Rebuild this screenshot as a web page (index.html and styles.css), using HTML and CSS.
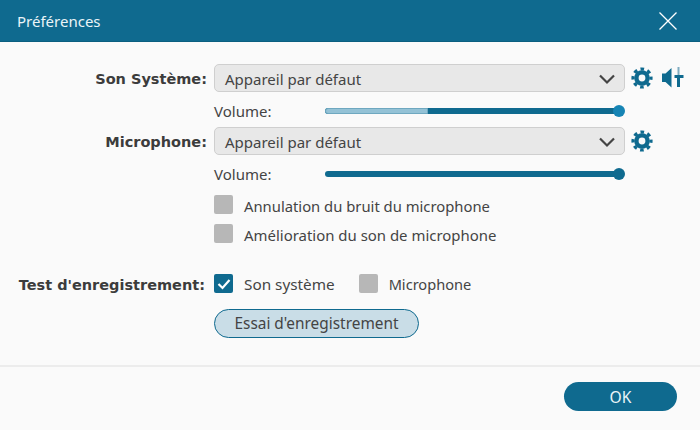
FILE: index.html
```html
<!DOCTYPE html>
<html lang="fr">
<head>
<meta charset="utf-8">
<title>Préférences</title>
<link rel="stylesheet" href="styles.css">
</head>
<body>
<div class="dialog">
  <header class="titlebar">
    <span class="title">Préférences</span>
    <svg class="close" width="18" height="18" viewBox="0 0 18 18"><path d="M0.5 0.5L17.5 17.5M17.5 0.5L0.5 17.5" stroke="#fff" stroke-width="1.3" fill="none"/></svg>
  </header>
  <main class="content">
    <div class="row">
      <span class="label">Son Système:</span>
      <div class="select"><span class="select-text">Appareil par défaut</span><svg class="chevron" width="18" height="11" viewBox="0 0 18 11"><path d="M2 1.5L9 8.5L16 1.5" stroke="#444" stroke-width="2.2" fill="none"/></svg></div>
      <div class="icons">
        <svg class="gear" width="22" height="22" viewBox="0 0 22 22"><use href="#gear"/></svg>
        <svg class="mixer" width="22" height="22" viewBox="0 0 22 22"><path d="M0 6.5H3.5L9.5 1V20.5L3.5 15H0Z" fill="#0f6a8f"/><rect x="15.5" y="0" width="2" height="8" fill="#7fabc0"/><rect x="15" y="8" width="3" height="12" fill="#0f6a8f"/><rect x="12.5" y="8" width="9" height="3" fill="#0f6a8f"/></svg>
      </div>
    </div>
    <div class="volume">
      <span class="vol-label">Volume:</span>
      <div class="slider"><div class="buffer"></div><div class="thumb thumb-light"></div></div>
    </div>
    <div class="row">
      <span class="label">Microphone:</span>
      <div class="select"><span class="select-text">Appareil par défaut</span><svg class="chevron" width="18" height="11" viewBox="0 0 18 11"><path d="M2 1.5L9 8.5L16 1.5" stroke="#444" stroke-width="2.2" fill="none"/></svg></div>
      <div class="icons">
        <svg class="gear" width="22" height="22" viewBox="0 0 22 22"><use href="#gear"/></svg>
      </div>
    </div>
    <div class="volume">
      <span class="vol-label">Volume:</span>
      <div class="slider"><div class="thumb"></div></div>
    </div>
    <div class="checks">
      <label class="check"><span class="box"></span>Annulation du bruit du microphone</label>
      <label class="check check-long"><span class="box"></span>Amélioration du son de microphone</label>
    </div>
    <div class="test-row">
      <span class="label">Test d'enregistrement:</span>
      <label class="check check-sys"><span class="box box-on"><svg width="14" height="12" viewBox="0 0 14 12"><path d="M1.5 6L5.5 10L12.5 2" stroke="#fff" stroke-width="2.2" fill="none"/></svg></span>Son système</label>
      <label class="check check-mic"><span class="box"></span>Microphone</label>
    </div>
    <button class="test-btn">Essai d'enregistrement</button>
  </main>
  <footer class="footer"><button class="ok">OK</button></footer>
</div>
<svg class="defs" width="0" height="0"><defs>
  <g id="gear" fill="none" stroke="#0f6a8f">
    <circle cx="11" cy="11" r="5.6" stroke-width="4.4"/>
    <circle cx="11" cy="11" r="9" stroke-width="3.2" stroke-dasharray="3.6 3.47" stroke-dashoffset="1.8"/>
  </g>
</defs></svg>
</body>
</html>
```
FILE: styles.css
```css
* { box-sizing: border-box; }
html, body { margin: 0; padding: 0; }
body { width: 700px; height: 430px; overflow: hidden; background: #fafafa; font-family: "Noto Sans", "Open Sans", sans-serif; font-size: 15px; color: #444; }
.dialog { width: 700px; height: 430px; display: flex; flex-direction: column; }
.titlebar { height: 42px; flex: none; background: #0f6a8f; border-bottom: 1px solid #0b5f80; display: flex; align-items: center; justify-content: space-between; padding: 0 23px 0 17px; color: #eaf4f8; font-size: 15px; }
.content { flex: 1; padding: 22px 0 0; display: flex; flex-direction: column; }
.row { display: flex; align-items: center; height: 28px; }
.label { width: 207px; padding-top: 2px; text-align: right; font-family: "DejaVu Sans", sans-serif; font-weight: bold; font-size: 14.5px; color: #3c3c3c; white-space: nowrap; flex: none; }
.select { width: 411px; height: 28px; margin-left: 7px; background: #e8e8e8; border: 1px solid #cfcfcf; border-radius: 5px; display: flex; align-items: center; justify-content: space-between; padding: 0 8px 0 10px; flex: none; }
.select-text { padding-top: 1px; }
.chevron { margin-top: 2px; }
.icons { display: flex; align-items: center; gap: 9px; margin-left: 6px; }
.volume { display: flex; align-items: center; height: 35px; padding: 3px 0 0 214px; }
.vol-label { width: 111px; flex: none; }
.slider { position: relative; width: 294px; height: 6px; border-radius: 3px; background: #0f6a8f; }
.buffer { width: 103px; height: 6px; border-radius: 3px 0 0 3px; background: #94c2d6; border: 1px solid #6fa8c0; }
.thumb { position: absolute; right: -6px; top: -3px; width: 12px; height: 12px; border-radius: 50%; background: #0f6a8f; }
.thumb-light { background: #1684b4; }
.checks { display: flex; flex-direction: column; gap: 10px; padding-left: 214px; margin-top: 5px; font-size: 14.8px; }
.checks .check { padding-top: 2px; }
.checks .box { margin-top: -2px; }
.check-long { font-size: 14.95px; }
.check { display: flex; align-items: center; gap: 11px; height: 19px; }
.box { width: 19px; height: 19px; border-radius: 2px; background: #b7b7b7; flex: none; display: flex; align-items: center; justify-content: center; }
.box-on { background: #0f6a8f; }
.test-row { display: flex; align-items: center; gap: 24px; margin-top: 31px; }
.test-row .label { width: 205px; margin-right: -15px; }
.check-sys { font-size: 15.3px; }
.check-mic { font-size: 14.6px; }
.test-btn { align-self: flex-start; margin: 16px 0 0 214px; width: 205px; height: 29px; border: 1px solid #0f6a8f; border-radius: 15px; background: #c9dde7; color: #444; font: inherit; font-size: 15.4px; padding: 0; }
.footer { height: 65px; flex: none; border-top: 2px solid #ececec; display: flex; justify-content: flex-end; padding: 15px 23px 0 0; }
.ok { width: 113px; height: 29px; border: 0; border-radius: 15px; background: #0f6a8f; color: #eaf4f8; font: inherit; font-size: 15.6px; padding: 0; }
.defs { position: absolute; }
```
